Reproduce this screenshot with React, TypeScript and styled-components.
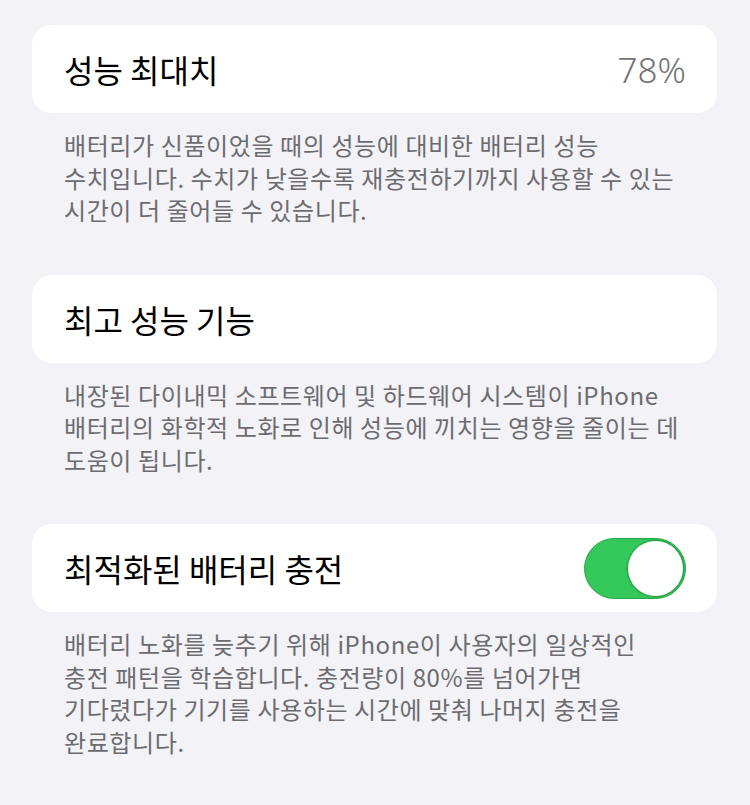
import React from 'react';
import styled, { createGlobalStyle } from 'styled-components';

const GlobalStyle = createGlobalStyle`
  html, body {
    margin: 0;
    padding: 0;
    background: #f2f2f7;
  }
  body {
    font-family: "Noto Sans CJK KR", "Noto Sans", sans-serif;
    -webkit-font-smoothing: antialiased;
  }
`;

interface Section {
  title: string;
  value?: string;
  toggle?: boolean;
  footer: string[];
}

const sections: Section[] = [
  {
    title: '성능 최대치',
    value: '78%',
    footer: [
      '배터리가 신품이었을 때의 성능에 대비한 배터리 성능',
      '수치입니다. 수치가 낮을수록 재충전하기까지 사용할 수 있는',
      '시간이 더 줄어들 수 있습니다.',
    ],
  },
  {
    title: '최고 성능 기능',
    footer: [
      '내장된 다이내믹 소프트웨어 및 하드웨어 시스템이 iPhone',
      '배터리의 화학적 노화로 인해 성능에 끼치는 영향을 줄이는 데',
      '도움이 됩니다.',
    ],
  },
  {
    title: '최적화된 배터리 충전',
    toggle: true,
    footer: [
      '배터리 노화를 늦추기 위해 iPhone이 사용자의 일상적인',
      '충전 패턴을 학습합니다. 충전량이 80%를 넘어가면',
      '기다렸다가 기기를 사용하는 시간에 맞춰 나머지 충전을',
      '완료합니다.',
    ],
  },
];

const App: React.FC = () => {
  return (
    <Page>
      <GlobalStyle />
      {sections.map((s) => (
        <Group key={s.title}>
          <Cell>
            <Title>{s.title}</Title>
            {s.value && <Value>{s.value}</Value>}
            {s.toggle && (
              <Switch>
                <Knob />
              </Switch>
            )}
          </Cell>
          <Footer>
            {s.footer.map((line) => (
              <div key={line}>{line}</div>
            ))}
          </Footer>
        </Group>
      ))}
    </Page>
  );
};

export default App;

const Page = styled.div`
  display: flex;
  flex-direction: column;
  gap: 48px;
  padding: 25px 33px 40px 32px;
  min-height: 805px;
  box-sizing: border-box;
`;

const Group = styled.section`
  display: flex;
  flex-direction: column;
`;

const Cell = styled.div`
  display: flex;
  align-items: center;
  justify-content: space-between;
  height: 88px;
  padding: 0 31px 0 32px;
  background: #ffffff;
  border-radius: 20px;
`;

const Title = styled.span`
  font-size: 32px;
  color: #000000;
`;

const Value = styled.span`
  font-family: "Noto Sans", "Liberation Sans", sans-serif;
  font-size: 35px;
  font-weight: 300;
  color: #737378;
`;

const Switch = styled.div`
  display: flex;
  align-items: center;
  justify-content: flex-end;
  width: 102px;
  height: 61px;
  padding: 2px;
  box-sizing: border-box;
  background: #34c759;
  border: 1px solid #2aa64a;
  border-radius: 31px;
`;

const Knob = styled.div`
  width: 55px;
  height: 55px;
  border-radius: 50%;
  background: #ffffff;
  box-shadow: 0 0 0 1.5px #2aa64a;
`;

const Footer = styled.div`
  padding: 16px 32px 0;
  font-size: 24px;
  letter-spacing: 0.6px;
  line-height: 32.5px;
  color: #6c6c70;
`;
